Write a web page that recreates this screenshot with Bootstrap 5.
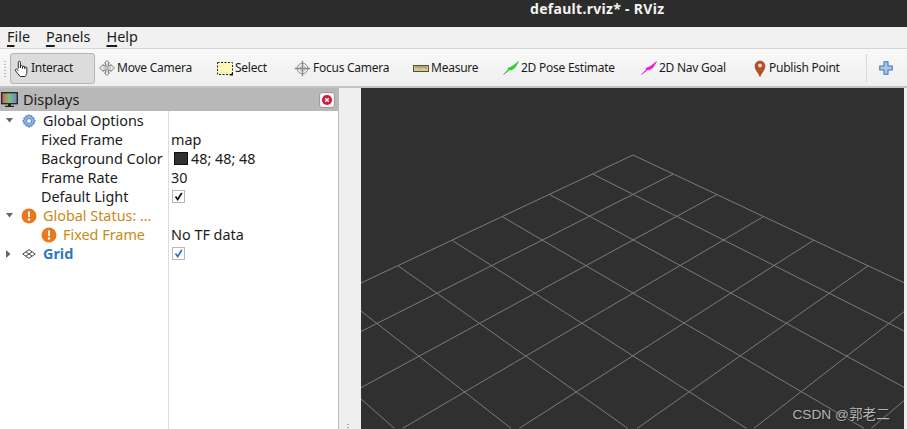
<!DOCTYPE html>
<html lang="en">
<head>
<meta charset="utf-8">
<title>RViz</title>
<link href="https://cdn.jsdelivr.net/npm/bootstrap@5.3.0/dist/css/bootstrap.min.css" rel="stylesheet">
<style>
html,body{height:100%;overflow:hidden}
body{font-family:"Noto Sans","Open Sans",sans-serif;color:#1c1c1c;background:#efefef}
.app-shell{width:907px;height:429px}
.title-strip{height:27px;background:#2c2c2c;color:#f2f2f2;font-size:14px;letter-spacing:.3px;font-weight:700;padding-left:530px;line-height:18px;white-space:nowrap}
.menu-strip{height:22px;background:#f1f1f1;border-bottom:1px solid #d6d6d6;font-size:14.4px;line-height:20px;padding-left:7px;gap:16px}
.menu-strip u{text-decoration-thickness:2px;text-underline-offset:3px}
.tool-strip{height:39px;padding-top:1px;background:linear-gradient(#f9f9f9,#efefef);border-bottom:2px solid #c4c4c4;font-size:12px;letter-spacing:-.25px;white-space:nowrap}
.grip{width:4px;height:17px;margin:0 3px 0 3px;background-image:radial-gradient(#b9b9b9 .7px,transparent .8px);background-size:4px 3px}
.tool-item{height:31px;padding-left:3px;gap:2px;border:1px solid transparent;border-radius:3px}
.tool-item svg{flex:none}
.tool-on{background:#dcdcdc;border-color:#b4b4b4;width:85px;padding-left:2px;gap:1px}
.w-move{width:118px}.w-sel{width:77px}.w-focus{width:119px}.w-meas{width:90px}.w-pose{width:138px}.w-nav{width:112px}.w-pub{width:117px}
.tool-sep{width:1px;height:28px;background:#d8d8d8}
.plus-slot{padding-left:12px}
.work-area{min-height:0}
.side-panel{width:339px;background:#fff;border-right:1px solid #bcbcbc}
.panel-head{height:23px;background:#b8b8b8;font-size:14.5px;padding:0 3px 0 1px;gap:5px}
.close-tile{width:16px;height:16px;background:#f4f4f4;border:1px solid #9c9c9c;border-radius:3px}
.prop-row{height:19px;font-size:14.4px;line-height:19px;white-space:nowrap}
.name-cell{width:169px;flex:none;border-right:1px solid #dcdcdc}
.value-cell{padding-left:2px}
.ind-a{padding-left:41px}
.ind-b{padding-left:6px}
.arrow-box{width:16px;flex:none}
.icon-box{width:21px;flex:none}
.icon-wide{width:22px}
.nudge-left{margin-left:-1px}
.status-text{color:#c98a14}
.grid-text{color:#2d77c4;font-weight:700}
.swatch{width:14px;height:13px;background:#303030;border:1px solid #111;margin:0 3px 0 3px}
.tick-box{width:13px;height:13px;border:1px solid #b8b8b8;background:#fff;margin-left:1px}
.filler{flex:1 1 0;min-height:0}
.split-gap{width:22px;flex:none;background:#efefef}
.split-dots{height:6px;width:16px;margin:auto 0 0 3px;background-image:radial-gradient(#aaa .7px,transparent .8px);background-size:12px 3px}
.scene-wrap{width:543px;flex:none;background:#303030}
.scene-wrap svg{display:block}
.edge-strip{width:3px;flex:none;background:#efefef}
.mark-text{right:14px;bottom:6px;color:#b4b4b4;font:13.7px "Liberation Sans","Noto Sans CJK SC",sans-serif;text-shadow:1px 1px 1px #222}
</style>
</head>
<body>
<div class="app-shell d-flex flex-column">
  <div class="title-strip flex-shrink-0">default.rviz* - RViz</div>
  <div class="menu-strip d-flex flex-shrink-0">
    <span><u>F</u>ile</span><span><u>P</u>anels</span><span><u>H</u>elp</span>
  </div>
  <div class="tool-strip d-flex align-items-center flex-shrink-0">
    <div class="grip"></div>
    <div class="tool-item tool-on d-flex align-items-center">
      <svg width="17" height="17" viewBox="1 0 13 16"><path d="M4.500 8V2.200c0-1.500 2-1.500 2 0V7.500V6.200c0-1.300 2-1.300 2 0V8V6.700c0-1.200 2-1.200 2 0V8.200V7.400c0-1.100 2-1.100 2 0v4.100c0 2-1 3-1.600 4H6.300C5 13.500 3.300 12.400 2 10.300 1.100 8.900 2.700 7.900 3.600 9l.9 1.200" fill="#fff" stroke="#222" stroke-width=".9" stroke-linejoin="round"/></svg>
      <span>Interact</span>
    </div>
    <div class="tool-item w-move d-flex align-items-center">
      <svg width="16" height="16" viewBox="0 0 16 16"><path d="M8 .5 10.500 3H9.500v2.500H12V4.500L15.500 8 12 11.500v-1H9.500V13h1L8 15.500 5.500 13h1v-2.500H4v1L.5 8 4 4.500v1h2.500V3h-1z" fill="#e6e6e6" stroke="#777" stroke-width=".9" stroke-linejoin="round"/><path d="M4 8h8M8 4v8M5.500 6.500h5M5.500 9.500h5" stroke="#999" stroke-width=".7"/></svg>
      <span>Move Camera</span>
    </div>
    <div class="tool-item w-sel d-flex align-items-center">
      <svg width="16" height="15" viewBox="0 0 16 15"><rect x=".5" y="1.500" width="15" height="12" fill="#fdf7bb" stroke="#222" stroke-dasharray="2 1.500"/><path d="M12.500 14.500 16 14.500V11z" fill="#111"/></svg>
      <span>Select</span>
    </div>
    <div class="tool-item w-focus d-flex align-items-center">
      <svg width="17" height="17" viewBox="0 0 17 17"><circle cx="8.500" cy="8.500" r="5.300" fill="#eee" stroke="#8a8a8a"/><circle cx="8.500" cy="8.500" r="2.600" fill="none" stroke="#aaa" stroke-width=".8"/><path d="M8.500.8v15.400M.8 8.500h15.400" stroke="#8a8a8a" stroke-width="1.300"/></svg>
      <span>Focus Camera</span>
    </div>
    <div class="tool-item w-meas d-flex align-items-center">
      <svg width="16" height="7" viewBox="0 0 16 7"><rect x=".5" y=".5" width="15" height="6" fill="#d9c98f" stroke="#55503c"/><path d="M3 1v2M5 1v2M7 1v3M9 1v2M11 1v2M13 1v3" stroke="#6b6344" stroke-width=".7"/></svg>
      <span>Measure</span>
    </div>
    <div class="tool-item w-pose d-flex align-items-center">
      <svg width="16" height="14" viewBox="0 0 16 14"><path d="M.5 13.500 5.500 8.500 4.800 7.500 10 5 15.500.5 12 6.500 8 9.200 7.300 8.200z" fill="#1fdc27" stroke="#12b81c" stroke-width=".6"/></svg>
      <span>2D Pose Estimate</span>
    </div>
    <div class="tool-item w-nav d-flex align-items-center">
      <svg width="16" height="14" viewBox="0 0 16 14"><path d="M.5 13.500 5.500 8.500 4.800 7.500 10 5 15.500.5 12 6.500 8 9.200 7.300 8.200z" fill="#ef1fd8" stroke="#d712c2" stroke-width=".6"/></svg>
      <span>2D Nav Goal</span>
    </div>
    <div class="tool-item w-pub d-flex align-items-center">
      <svg width="14" height="17" viewBox="0 0 14 17"><path d="M7 16.500C5.800 13 2 10 2 6a5 5 0 0 1 10 0c0 4-3.800 7-5 10.500z" fill="#b4502a" stroke="#7c3a20" stroke-width=".6"/><circle cx="7" cy="5.500" r="1.900" fill="#f0d0b8"/></svg>
      <span>Publish Point</span>
    </div>
    <div class="tool-sep"></div>
    <div class="plus-slot d-flex">
      <svg width="14" height="14" viewBox="0 0 14 14"><path d="M5 .8h4V5h4.200v4H9v4.200H5V9H.8V5H5z" fill="#a9c6e8" stroke="#3e77b6" stroke-width="1.100"/></svg>
    </div>
  </div>
  <div class="work-area d-flex flex-grow-1">
    <div class="side-panel d-flex flex-column flex-shrink-0">
      <div class="panel-head d-flex align-items-center flex-shrink-0">
        <svg width="17" height="16" viewBox="0 0 17 16"><defs><linearGradient id="scr" x1="0" x2="1" y1="0" y2="0"><stop offset="0" stop-color="#d65a5a"/><stop offset=".5" stop-color="#74c47a"/><stop offset="1" stop-color="#7a7ad8"/></linearGradient></defs><rect x=".7" y=".7" width="15.600" height="11" fill="url(#scr)" stroke="#222" stroke-width="1.300"/><path d="M7 12h3v1.800h3V15H4v-1.200h3z" fill="#222"/></svg>
        <span class="flex-grow-1">Displays</span>
        <div class="close-tile d-flex align-items-center justify-content-center">
          <svg width="10" height="10" viewBox="0 0 10 10"><circle cx="5" cy="5" r="5" fill="#d3173f"/><path d="M3.200 3.200l3.600 3.600M6.800 3.200l-3.600 3.600" stroke="#fff" stroke-width="1.500"/></svg>
        </div>
      </div>
      <div class="prop-row d-flex flex-shrink-0"><div class="name-cell d-flex align-items-center ind-b">
        <div class="arrow-box"><svg class="d-block" width="8" height="5" viewBox="0 0 8 5"><path d="M0 0h7L3.500 4.500z" fill="#666"/></svg></div>
        <div class="icon-box"><svg class="d-block" width="14" height="14" viewBox="0 0 14 14"><path d="M7 .5l1 1.700 1.900-.6.400 2 2 .4-.6 1.900L13.500 7l-1.800 1 .6 1.900-2 .4-.4 2-1.900-.6-1 1.800-1-1.800-1.900.6-.4-2-2-.4.6-1.900L.5 7l1.800-1.100-.6-1.900 2-.4.400-2 1.900.6z" fill="#8fb4e6" stroke="#3c6fb8" stroke-width=".8"/><circle cx="7" cy="7" r="2.400" fill="#fff" stroke="#3c6fb8" stroke-width=".8"/></svg></div>
        <span>Global Options</span></div><div class="value-cell"></div></div>
      <div class="prop-row d-flex flex-shrink-0"><div class="name-cell ind-a">Fixed Frame</div><div class="value-cell">map</div></div>
      <div class="prop-row d-flex flex-shrink-0"><div class="name-cell ind-a">Background Color</div><div class="value-cell d-flex align-items-center"><div class="swatch"></div><span>48; 48; 48</span></div></div>
      <div class="prop-row d-flex flex-shrink-0"><div class="name-cell ind-a">Frame Rate</div><div class="value-cell">30</div></div>
      <div class="prop-row d-flex flex-shrink-0"><div class="name-cell ind-a">Default Light</div><div class="value-cell d-flex align-items-center"><div class="tick-box d-flex align-items-center justify-content-center"><svg width="9" height="9" viewBox="0 0 9 9"><path d="M1.500 4.500 3.700 7.500 7.800 1" fill="none" stroke="#111" stroke-width="1.700"/></svg></div></div></div>
      <div class="prop-row d-flex flex-shrink-0"><div class="name-cell d-flex align-items-center ind-b">
        <div class="arrow-box"><svg class="d-block" width="8" height="5" viewBox="0 0 8 5"><path d="M0 0h7L3.500 4.500z" fill="#666"/></svg></div>
        <div class="icon-box"><svg class="d-block nudge-left" width="16" height="16" viewBox="0 0 16 16"><circle cx="8" cy="8" r="7.500" fill="#e9781e"/><rect x="7" y="3.200" width="2" height="6" rx="1" fill="#fff"/><circle cx="8" cy="11.500" r="1.200" fill="#fff"/></svg></div>
        <span class="status-text">Global Status: …</span></div><div class="value-cell"></div></div>
      <div class="prop-row d-flex flex-shrink-0"><div class="name-cell d-flex align-items-center ind-a">
        <div class="icon-box icon-wide d-flex"><svg class="d-block" width="16" height="16" viewBox="0 0 16 16"><circle cx="8" cy="8" r="7.500" fill="#e9781e"/><rect x="7" y="3.200" width="2" height="6" rx="1" fill="#fff"/><circle cx="8" cy="11.500" r="1.200" fill="#fff"/></svg></div>
        <span class="status-text">Fixed Frame</span></div><div class="value-cell">No TF data</div></div>
      <div class="prop-row d-flex flex-shrink-0"><div class="name-cell d-flex align-items-center ind-b">
        <div class="arrow-box"><svg class="d-block" width="5" height="8" viewBox="0 0 5 8"><path d="M0 0v8l4.500-4z" fill="#666"/></svg></div>
        <div class="icon-box"><svg class="d-block" width="14" height="10" viewBox="0 0 14 10"><path d="M7 .7 13.300 5 7 9.300.7 5zM3.900 2.900l6.200 4.200M10.100 2.900 3.900 7.100" fill="#fff" stroke="#333" stroke-width=".9"/></svg></div>
        <span class="grid-text">Grid</span></div><div class="value-cell d-flex align-items-center"><div class="tick-box d-flex align-items-center justify-content-center"><svg width="9" height="9" viewBox="0 0 9 9"><path d="M1.500 4.500 3.700 7.500 7.800 1" fill="none" stroke="#2d6fb8" stroke-width="1.700"/></svg></div></div></div>
      <div class="prop-row d-flex filler"><div class="name-cell"></div><div class="value-cell"></div></div>
    </div>
    <div class="split-gap d-flex"><div class="split-dots"></div></div>
    <div class="scene-wrap position-relative">
      <svg width="543" height="341" viewBox="361 88 543 341" fill="none" stroke="#7b7b7b" stroke-width="1">
        <path d="M633 155 361 283M673.300 174 361 331.500M717.300 194.300 361 387.700M763.300 216.700 402.700 428.300M814 240 519.300 428.300M868.300 265.700 637 428.500M904 311.700 754 428.300M904 400.700 871.300 428.300"/>
        <path d="M633 155 904 282.700M592.700 174 904 331M549.300 194.300 904 387.300M502.300 216.700 864 428.300M452 240.300 746.300 428.300M398 265.700 627.700 428.300M361 311 511 428.300M361 399 394.300 428.300"/>
      </svg>
      <div class="mark-text position-absolute">CSDN @郭老二</div>
    </div>
    <div class="edge-strip"></div>
  </div>
</div>
<script src="https://cdn.jsdelivr.net/npm/bootstrap@5.3.0/dist/js/bootstrap.bundle.min.js"></script>
</body>
</html>
